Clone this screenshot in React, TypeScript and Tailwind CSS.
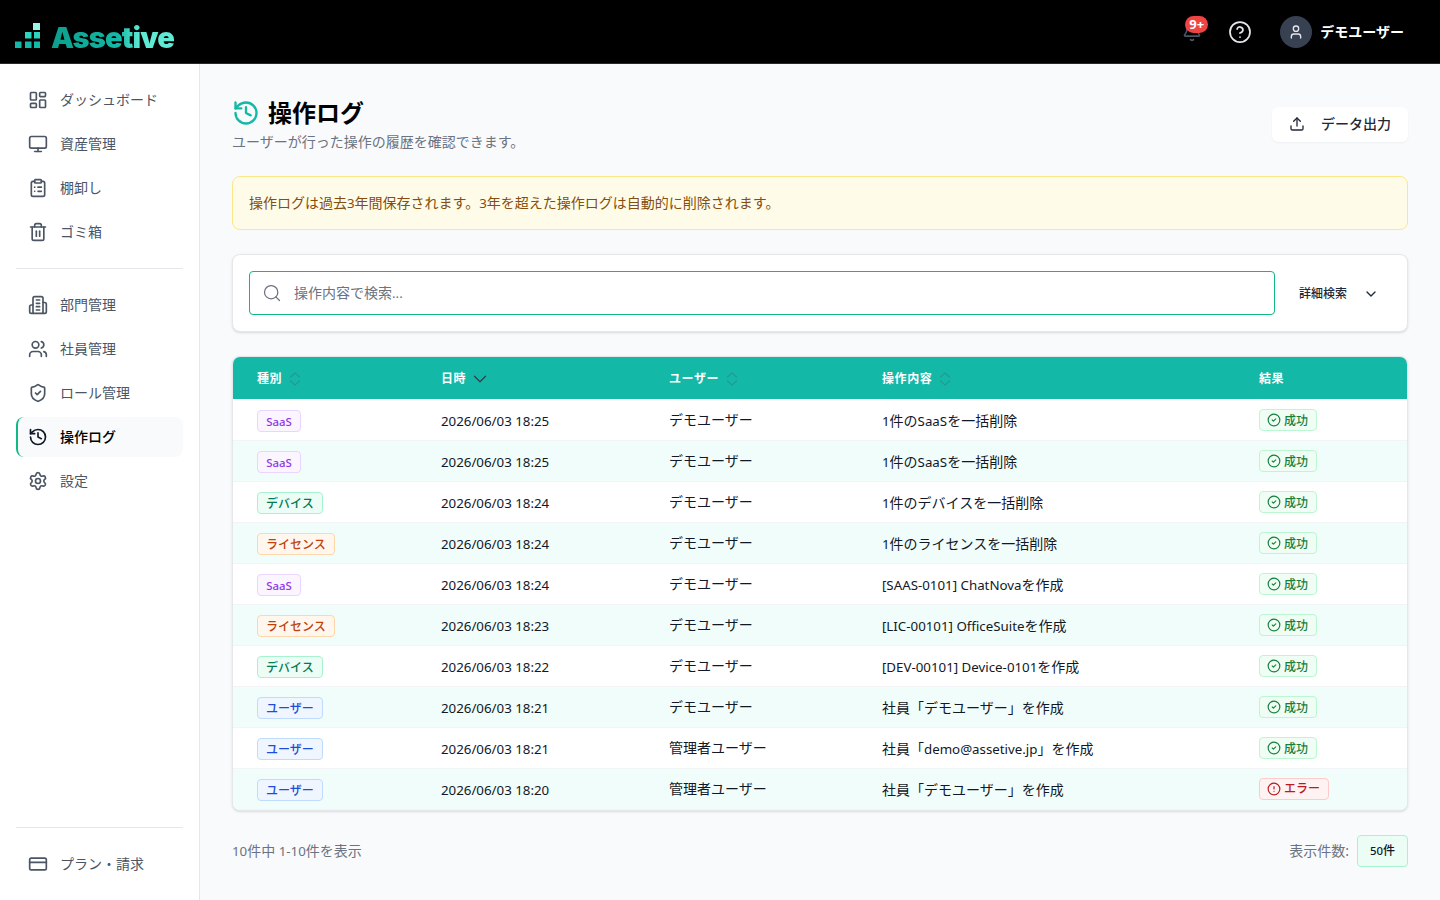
import React from "react";
import {
  LayoutDashboard, Monitor, ClipboardList, Trash2, Users, ShieldCheck, History, Settings, CreditCard,
  Bell, CircleHelp, User, Upload, Search, ChevronDown, CircleCheck, CircleAlert,
} from "lucide-react";

function BuildingIcon({ size = 20, strokeWidth = 2, className = "" }: { size?: number; strokeWidth?: number; className?: string }) {
  return (
    <svg width={size} height={size} viewBox="0 0 24 24" fill="none" stroke="currentColor" strokeWidth={strokeWidth} strokeLinecap="round" strokeLinejoin="round" className={className}>
      <path d="M6 22V4a2 2 0 0 1 2-2h8a2 2 0 0 1 2 2v18Z" />
      <path d="M6 12H4a2 2 0 0 0-2 2v6a2 2 0 0 0 2 2h2" />
      <path d="M18 9h2a2 2 0 0 1 2 2v9a2 2 0 0 1-2 2h-2" />
      <path d="M10 6h4M10 10h4M10 14h4M10 18h4" />
    </svg>
  );
}

// Latin runs are set slightly smaller than the CJK text around them.
function L({ t }: { t: string }) {
  return (
    <>
      {t.split(/([\x00-\x7f]+)/).map((part, i) =>
        i % 2 ? (
          <span key={i} className="text-[0.95em]">
            {part}
          </span>
        ) : (
          part
        ),
      )}
    </>
  );
}

const navTop = [
  { label: "ダッシュボード", icon: LayoutDashboard },
  { label: "資産管理", icon: Monitor },
  { label: "棚卸し", icon: ClipboardList },
  { label: "ゴミ箱", icon: Trash2 },
];
const navMid = [
  { label: "部門管理", icon: BuildingIcon },
  { label: "社員管理", icon: Users },
  { label: "ロール管理", icon: ShieldCheck },
  { label: "操作ログ", icon: History, active: true },
  { label: "設定", icon: Settings },
];

const kinds: Record<string, string> = {
  SaaS: "min-w-[44px] justify-center bg-[#faf5ff] border-[#e9d5ff] text-[#9333ea]",
  デバイス: "bg-[#ecfdf5] border-[#a7f3d0] text-[#047857]",
  ライセンス: "bg-[#fff7ed] border-[#fed7aa] text-[#c2410c]",
  ユーザー: "bg-[#eff6ff] border-[#bfdbfe] text-[#1d4ed8]",
};

const rows = [
  ["SaaS", "2026/06/03 18:25", "デモユーザー", "1件のSaaSを一括削除", "ok"],
  ["SaaS", "2026/06/03 18:25", "デモユーザー", "1件のSaaSを一括削除", "ok"],
  ["デバイス", "2026/06/03 18:24", "デモユーザー", "1件のデバイスを一括削除", "ok"],
  ["ライセンス", "2026/06/03 18:24", "デモユーザー", "1件のライセンスを一括削除", "ok"],
  ["SaaS", "2026/06/03 18:24", "デモユーザー", "[SAAS-0101] ChatNovaを作成", "ok"],
  ["ライセンス", "2026/06/03 18:23", "デモユーザー", "[LIC-00101] OfficeSuiteを作成", "ok"],
  ["デバイス", "2026/06/03 18:22", "デモユーザー", "[DEV-00101] Device-0101を作成", "ok"],
  ["ユーザー", "2026/06/03 18:21", "デモユーザー", "社員「デモユーザー」を作成", "ok"],
  ["ユーザー", "2026/06/03 18:21", "管理者ユーザー", "社員「demo@assetive.jp」を作成", "ok"],
  ["ユーザー", "2026/06/03 18:20", "管理者ユーザー", "社員「デモユーザー」を作成", "err"],
];

function NavItem({ label, icon: Icon, active }: { label: string; icon: React.ComponentType<any>; active?: boolean }) {
  return (
    <div
      className={
        "flex h-10 items-center gap-3 rounded-lg text-sm " +
        (active ? "border-l-2 border-[#10b981] bg-[#f9fafb] pl-[10px] font-medium text-black" : "px-3 text-[#4b5563]")
      }
    >
      <Icon size={20} strokeWidth={2} className={active ? "text-[#111827]" : "text-[#4b5563]"} />
      <span>{label}</span>
    </div>
  );
}

function SortIcon() {
  return (
    <svg width="12" height="16" viewBox="0 0 12 16" fill="none" stroke="#4b5563" strokeOpacity="0.3" strokeWidth="1.2" strokeLinecap="round" strokeLinejoin="round">
      <path d="M1.5 6 6 2l4.5 4M1.5 10 6 14l4.5-4" />
    </svg>
  );
}

function Head({ label, sort, active }: { label: string; sort?: boolean; active?: boolean }) {
  return (
    <th className="px-6 pt-px text-left text-xs font-bold tracking-wider text-white">
      <span className={"flex items-center " + (active ? "gap-[3px]" : "gap-[7px]")}>
        {label}
        {sort && <SortIcon />}
        {active && <ChevronDown size={22} strokeWidth={1.5} className="text-[#374151]" />}
      </span>
    </th>
  );
}

export default function App() {
  return (
    <div className="flex h-[900px] w-[1440px] flex-col overflow-hidden bg-[#f9fafb] font-['Noto_Sans','Noto_Sans_CJK_JP',sans-serif] text-[#111827]">
      <header className="flex h-16 shrink-0 items-center justify-between border-b border-[#1f2937] bg-black pr-9 pl-[15px]">
        <div className="flex items-end gap-[11px] pt-[7px]">
          <svg width="25" height="25" viewBox="0 0 25 25">
            <rect x="0" y="18.5" width="6.5" height="6.5" fill="#14b8a6" />
            <rect x="10" y="18.5" width="6.5" height="6.5" fill="#14b8a6" />
            <rect x="19" y="18.5" width="6" height="6.5" fill="#14b8a6" />
            <rect x="10" y="9" width="6.5" height="6.5" fill="#2dd4bf" />
            <rect x="19" y="9" width="6" height="6.5" fill="#2dd4bf" />
            <rect x="18" y="0" width="7" height="7" fill="#99f6e4" />
          </svg>
          <span className="-mb-[6px] bg-[linear-gradient(90deg,#0d9e8c_0%,#14b8a6_55%,#5eead4_72%)] bg-clip-text font-['Inter',sans-serif] text-[29px] leading-8 font-black tracking-[-0.85px] text-transparent">
            Assetive
          </span>
        </div>
        <div className="flex items-center">
          <div className="relative flex h-6 w-6 items-center justify-center">
            <Bell size={20} className="text-[#4b5563]" />
            <span className="absolute -top-[4px] -right-[4px] flex h-[17px] w-[23px] items-center justify-center rounded-full bg-[#ef4444] pt-px text-[13px] font-bold text-white">
              9+
            </span>
          </div>
          <CircleHelp size={24} strokeWidth={1.75} className="ml-[24px] text-[#e5e7eb]" />
          <div className="ml-[28px] flex h-8 w-8 items-center justify-center rounded-full bg-[#374151]">
            <User size={16} className="text-[#e5e7eb]" />
          </div>
          <span className="ml-[8px] text-sm font-semibold text-white">デモユーザー</span>
        </div>
      </header>

      <div className="flex min-h-0 flex-1">
        <aside className="flex w-[200px] shrink-0 flex-col border-r border-[#e5e7eb] bg-white p-4">
          <nav className="flex flex-col gap-1">
            {navTop.map((n) => (
              <NavItem key={n.label} {...n} />
            ))}
          </nav>
          <div className="my-4 border-t border-[#e5e7eb]" />
          <nav className="flex flex-col gap-1">
            {navMid.map((n) => (
              <NavItem key={n.label} {...n} />
            ))}
          </nav>
          <div className="mt-auto mb-4 border-t border-[#e5e7eb]" />
          <NavItem label="プラン・請求" icon={CreditCard} />
        </aside>

        <main className="flex min-w-0 flex-1 flex-col px-8 pt-[33px]">
          <div className="flex items-start justify-between">
            <div>
              <div className="flex items-center gap-2">
                <History size={28} strokeWidth={2} className="text-[#14b8a6]" />
                <h1 className="text-2xl font-bold text-black">操作ログ</h1>
              </div>
              <p className="mt-[3px] text-sm text-[#6b7280]">ユーザーが行った操作の履歴を確認できます。</p>
            </div>
            <button className="mt-[10px] flex h-[35px] w-[136px] items-center gap-[16px] rounded-md bg-white pb-px pl-[17px] text-sm font-medium text-[#1f2937] shadow-xs">
              <Upload size={16} strokeWidth={2} />
              データ出力
            </button>
          </div>

          <div className="mt-6 flex h-[54px] items-center rounded-lg border border-[#fde68a] bg-[#fefce8] px-4 text-sm text-[#854d0e]">
            <span>
              <L t="操作ログは過去3年間保存されます。3年を超えた操作ログは自動的に削除されます。" />
            </span>
          </div>

          <div className="mt-6 flex h-[78px] items-center rounded-lg border border-[#e5e7eb] bg-white px-4 shadow-sm">
            <div className="flex h-11 flex-1 items-center gap-3 rounded border border-[#10b981] px-3 text-sm text-[#6b7280]">
              <Search size={20} strokeWidth={1.5} className="text-[#6b7280]" />
              <span>
                <L t="操作内容で検索..." />
              </span>
            </div>
            <div className="flex w-[116px] items-center gap-[16px] pt-px pl-[24px] text-xs font-medium text-[#1f2937]">
              詳細検索
              <ChevronDown size={16} strokeWidth={2} />
            </div>
          </div>

          <div className="mt-6 overflow-hidden rounded-lg border border-[#e5e7eb] bg-white shadow-sm">
            <table className="w-full table-fixed border-collapse">
              <colgroup>
                <col className="w-[184px]" />
                <col className="w-[228px]" />
                <col className="w-[213px]" />
                <col className="w-[377px]" />
                <col />
              </colgroup>
              <thead>
                <tr className="h-[42px] bg-[#14b8a6]">
                  <Head label="種別" sort />
                  <Head label="日時" active />
                  <Head label="ユーザー" sort />
                  <Head label="操作内容" sort />
                  <Head label="結果" />
                </tr>
              </thead>
              <tbody>
                {rows.map((r, i) => (
                  <tr key={i} className={"h-[41px] border-b border-[#f3f4f6] text-sm " + (i % 2 ? "bg-[#f0fdfa]" : "bg-white")}>
                    <td className="px-6 pt-[3px]">
                      <span className={"flex h-[22px] w-fit items-center rounded border px-2 pt-[2px] text-xs font-medium " + kinds[r[0]]}>
                        <L t={r[0]} />
                      </span>
                    </td>
                    <td className="px-6 pt-[3px]">
                      <L t={r[1]} />
                    </td>
                    <td className="px-6 pt-px">{r[2]}</td>
                    <td className="px-6 pt-[3px]">
                      <L t={r[3]} />
                    </td>
                    <td className="px-6 pt-px">
                      {r[4] === "ok" ? (
                        <span className="flex h-[22px] w-fit items-center gap-[3px] rounded border border-[#bbf7d0] bg-[#f0fdf4] px-2 text-xs font-medium text-[#15803d]">
                          <CircleCheck size={14} strokeWidth={2} className="-ml-px" />
                          <span className="pt-[2px]">成功</span>
                        </span>
                      ) : (
                        <span className="flex h-[22px] w-fit items-center gap-[3px] rounded border border-[#fecaca] bg-[#fef2f2] px-2 text-xs font-medium text-[#b91c1c]">
                          <CircleAlert size={14} strokeWidth={2} className="-ml-px" />
                          <span>エラー</span>
                        </span>
                      )}
                    </td>
                  </tr>
                ))}
              </tbody>
            </table>
          </div>

          <div className="mt-6 flex items-center justify-between text-sm text-[#6b7280]">
            <span>
              <L t="10件中 1-10件を表示" />
            </span>
            <div className="flex items-center gap-2">
              <span>表示件数:</span>
              <span className="flex h-8 w-[51px] items-center justify-center rounded border border-[#a7f3d0] bg-[#ecfdf5] text-xs font-medium text-[#111827]">
                <L t="50件" />
              </span>
            </div>
          </div>
        </main>
      </div>
    </div>
  );
}
